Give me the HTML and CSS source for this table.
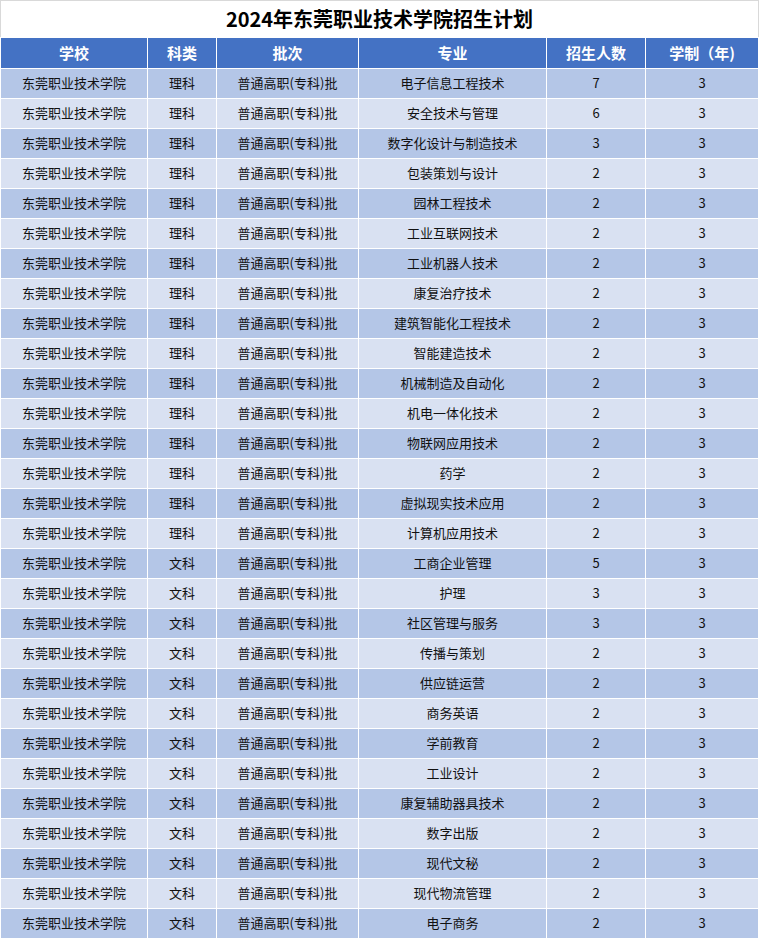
FILE: index.html
```html
<!DOCTYPE html>
<html lang="zh">
<head>
<meta charset="utf-8">
<title>2024年东莞职业技术学院招生计划</title>
<link rel="stylesheet" href="styles.css">
</head>
<body>
<div class="sheet">
  <div class="title">2024年东莞职业技术学院招生计划</div>
  <table class="plan">
    <colgroup>
      <col class="c1"><col class="c2"><col class="c3"><col class="c4"><col class="c5"><col class="c6">
    </colgroup>
    <thead>
      <tr><th>学校</th><th>科类</th><th>批次</th><th>专业</th><th>招生人数</th><th>学制（年)</th></tr>
    </thead>
    <tbody>
      <tr><td>东莞职业技术学院</td><td>理科</td><td>普通高职(专科)批</td><td>电子信息工程技术</td><td>7</td><td>3</td></tr>
      <tr><td>东莞职业技术学院</td><td>理科</td><td>普通高职(专科)批</td><td>安全技术与管理</td><td>6</td><td>3</td></tr>
      <tr><td>东莞职业技术学院</td><td>理科</td><td>普通高职(专科)批</td><td>数字化设计与制造技术</td><td>3</td><td>3</td></tr>
      <tr><td>东莞职业技术学院</td><td>理科</td><td>普通高职(专科)批</td><td>包装策划与设计</td><td>2</td><td>3</td></tr>
      <tr><td>东莞职业技术学院</td><td>理科</td><td>普通高职(专科)批</td><td>园林工程技术</td><td>2</td><td>3</td></tr>
      <tr><td>东莞职业技术学院</td><td>理科</td><td>普通高职(专科)批</td><td>工业互联网技术</td><td>2</td><td>3</td></tr>
      <tr><td>东莞职业技术学院</td><td>理科</td><td>普通高职(专科)批</td><td>工业机器人技术</td><td>2</td><td>3</td></tr>
      <tr><td>东莞职业技术学院</td><td>理科</td><td>普通高职(专科)批</td><td>康复治疗技术</td><td>2</td><td>3</td></tr>
      <tr><td>东莞职业技术学院</td><td>理科</td><td>普通高职(专科)批</td><td>建筑智能化工程技术</td><td>2</td><td>3</td></tr>
      <tr><td>东莞职业技术学院</td><td>理科</td><td>普通高职(专科)批</td><td>智能建造技术</td><td>2</td><td>3</td></tr>
      <tr><td>东莞职业技术学院</td><td>理科</td><td>普通高职(专科)批</td><td>机械制造及自动化</td><td>2</td><td>3</td></tr>
      <tr><td>东莞职业技术学院</td><td>理科</td><td>普通高职(专科)批</td><td>机电一体化技术</td><td>2</td><td>3</td></tr>
      <tr><td>东莞职业技术学院</td><td>理科</td><td>普通高职(专科)批</td><td>物联网应用技术</td><td>2</td><td>3</td></tr>
      <tr><td>东莞职业技术学院</td><td>理科</td><td>普通高职(专科)批</td><td>药学</td><td>2</td><td>3</td></tr>
      <tr><td>东莞职业技术学院</td><td>理科</td><td>普通高职(专科)批</td><td>虚拟现实技术应用</td><td>2</td><td>3</td></tr>
      <tr><td>东莞职业技术学院</td><td>理科</td><td>普通高职(专科)批</td><td>计算机应用技术</td><td>2</td><td>3</td></tr>
      <tr><td>东莞职业技术学院</td><td>文科</td><td>普通高职(专科)批</td><td>工商企业管理</td><td>5</td><td>3</td></tr>
      <tr><td>东莞职业技术学院</td><td>文科</td><td>普通高职(专科)批</td><td>护理</td><td>3</td><td>3</td></tr>
      <tr><td>东莞职业技术学院</td><td>文科</td><td>普通高职(专科)批</td><td>社区管理与服务</td><td>3</td><td>3</td></tr>
      <tr><td>东莞职业技术学院</td><td>文科</td><td>普通高职(专科)批</td><td>传播与策划</td><td>2</td><td>3</td></tr>
      <tr><td>东莞职业技术学院</td><td>文科</td><td>普通高职(专科)批</td><td>供应链运营</td><td>2</td><td>3</td></tr>
      <tr><td>东莞职业技术学院</td><td>文科</td><td>普通高职(专科)批</td><td>商务英语</td><td>2</td><td>3</td></tr>
      <tr><td>东莞职业技术学院</td><td>文科</td><td>普通高职(专科)批</td><td>学前教育</td><td>2</td><td>3</td></tr>
      <tr><td>东莞职业技术学院</td><td>文科</td><td>普通高职(专科)批</td><td>工业设计</td><td>2</td><td>3</td></tr>
      <tr><td>东莞职业技术学院</td><td>文科</td><td>普通高职(专科)批</td><td>康复辅助器具技术</td><td>2</td><td>3</td></tr>
      <tr><td>东莞职业技术学院</td><td>文科</td><td>普通高职(专科)批</td><td>数字出版</td><td>2</td><td>3</td></tr>
      <tr><td>东莞职业技术学院</td><td>文科</td><td>普通高职(专科)批</td><td>现代文秘</td><td>2</td><td>3</td></tr>
      <tr><td>东莞职业技术学院</td><td>文科</td><td>普通高职(专科)批</td><td>现代物流管理</td><td>2</td><td>3</td></tr>
      <tr><td>东莞职业技术学院</td><td>文科</td><td>普通高职(专科)批</td><td>电子商务</td><td>2</td><td>3</td></tr>
    </tbody>
  </table>
</div>
</body>
</html>
```

FILE: styles.css
```css
html, body {
  margin: 0;
  padding: 0;
  background: #ffffff;
}

body {
  font-family: "Noto Sans CJK SC", "Noto Sans", "Liberation Sans", sans-serif;
  color: #000000;
}

.sheet {
  width: 759px;
}

.title {
  box-sizing: border-box;
  height: 37px;
  border: 1px solid #d9d9d9;
  border-bottom: none;
  display: flex;
  align-items: center;
  justify-content: center;
  font-size: 20px;
  font-weight: 700;
  line-height: 1;
}

.plan {
  width: 759px;
  table-layout: fixed;
  border-collapse: separate;
  border-spacing: 1px;
  background: #ffffff;
}

.c1 { width: 146px; }
.c2 { width: 68px; }
.c3 { width: 141px; }
.c4 { width: 187px; }
.c5 { width: 98px; }
.c6 { width: 112px; }

.plan th,
.plan td {
  padding: 0;
  text-align: center;
  vertical-align: middle;
  white-space: nowrap;
  overflow: hidden;
  line-height: 1.2;
}

.plan th {
  height: 29px;
  padding-bottom: 1px;
  background: #4472c4;
  color: #ffffff;
  font-size: 15px;
  font-weight: 700;
}

.plan td {
  height: 27px;
  padding-bottom: 2px;
  font-size: 13px;
  color: #111111;
}

.plan tbody tr:nth-child(odd) td {
  background: #b4c6e7;
}

.plan tbody tr:nth-child(even) td {
  background: #d9e1f2;
}
```
